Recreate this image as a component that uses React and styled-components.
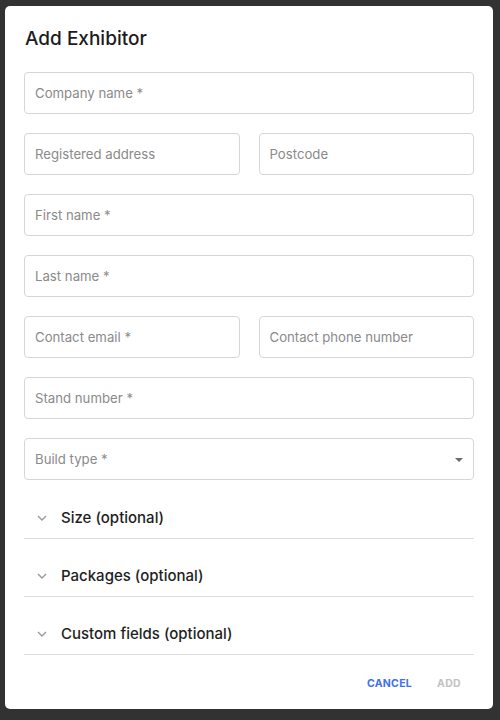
import React from "react";
import styled, { createGlobalStyle } from "styled-components";

const Global = createGlobalStyle`
  html, body {
    margin: 0;
    padding: 0;
    background: #323232;
  }
  body {
    font-family: "Inter", "Noto Sans", sans-serif;
  }
`;

const Backdrop = styled.div`
  width: 500px;
  height: 720px;
  box-sizing: border-box;
  padding: 6px 7px 11px 5px;
  background: #323232;
`;

const Dialog = styled.div`
  height: 100%;
  box-sizing: border-box;
  background: #fff;
  border-radius: 5px;
  padding: 0 19px;
  display: flex;
  flex-direction: column;
`;

const Title = styled.h2`
  margin: 0;
  padding: 22px 1px 0;
  height: 48px;
  box-sizing: border-box;
  font-size: 19px;
  font-weight: 500;
  line-height: 22px;
  color: #1c1c1c;
`;

const Form = styled.div`
  display: flex;
  flex-direction: column;
  gap: 19px;
  padding: 18px 0 1px;
`;

const Row = styled.div`
  display: grid;
  grid-template-columns: ${(p) => (p.split ? "1fr 1fr" : "1fr")};
  gap: 19px;
`;

const Field = styled.div`
  position: relative;
  height: 42px;
  box-sizing: border-box;
  border: 1px solid #d6d6d6;
  border-radius: 4px;
  display: flex;
  align-items: center;
  padding: 0 10px;
  font-size: 13.2px;
  color: #8a8a8a;
`;

const Caret = styled.span`
  position: absolute;
  right: 10px;
  top: 19px;
  width: 0;
  height: 0;
  border-left: 4px solid transparent;
  border-right: 4px solid transparent;
  border-top: 4px solid #6b6b6b;
`;

const Sections = styled.div`
  display: flex;
  flex-direction: column;
`;

const Section = styled.div`
  height: 58px;
  box-sizing: border-box;
  border-bottom: 1px solid #dedede;
  display: flex;
  align-items: flex-end;
  gap: 14px;
  padding: 0 0 12px 13px;
  font-size: 15px;
  line-height: 16px;
  font-weight: 450;
  color: #1e1e1e;
`;

const ChevronBox = styled.span`
  display: flex;
  align-items: center;
  height: 16px;
`;

const Actions = styled.div`
  display: flex;
  justify-content: flex-end;
  gap: 25px;
  padding: 22px 13px 0 0;
`;

const Btn = styled.span`
  font-size: 10.5px;
  font-weight: 700;
  letter-spacing: 0.3px;
  color: ${(p) => (p.disabled ? "#c2c2c2" : "#3d6ff2")};
`;

const Chevron = () => (
  <ChevronBox>
    <svg width="10" height="6" viewBox="0 0 10 6" fill="none">
      <path d="M1 1l4 4 4-4" stroke="#9a9a9a" strokeWidth="1.4" />
    </svg>
  </ChevronBox>
);

export default function App() {
  return (
    <Backdrop>
      <Global />
      <Dialog>
        <Title>Add Exhibitor</Title>
        <Form>
          <Row>
            <Field>Company name *</Field>
          </Row>
          <Row split>
            <Field>Registered address</Field>
            <Field>Postcode</Field>
          </Row>
          <Row>
            <Field>First name *</Field>
          </Row>
          <Row>
            <Field>Last name *</Field>
          </Row>
          <Row split>
            <Field>Contact email *</Field>
            <Field>Contact phone number</Field>
          </Row>
          <Row>
            <Field>Stand number *</Field>
          </Row>
          <Row>
            <Field>
              Build type *
              <Caret />
            </Field>
          </Row>
        </Form>
        <Sections>
          {["Size (optional)", "Packages (optional)", "Custom fields (optional)"].map((t) => (
            <Section key={t}>
              <Chevron />
              {t}
            </Section>
          ))}
        </Sections>
        <Actions>
          <Btn>CANCEL</Btn>
          <Btn disabled>ADD</Btn>
        </Actions>
      </Dialog>
    </Backdrop>
  );
}
